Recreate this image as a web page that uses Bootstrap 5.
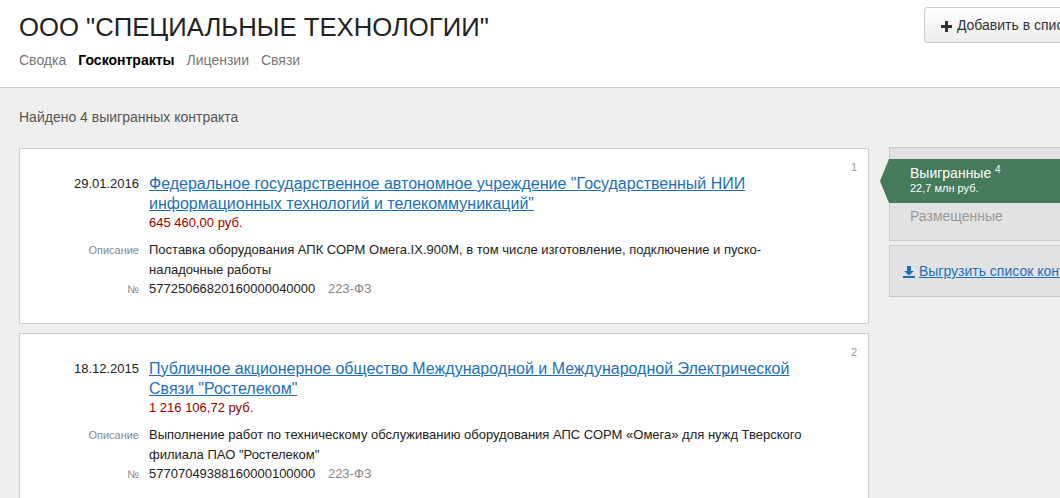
<!doctype html>
<html lang="ru"><head><meta charset="utf-8">
<link href="https://cdn.jsdelivr.net/npm/bootstrap@5.3.0/dist/css/bootstrap.min.css" rel="stylesheet">
<style>
html,body{height:498px;overflow:hidden}
body{background:#efefef;font-family:"Liberation Sans",Arial,sans-serif;color:#222;font-size:13px;width:1060px}
.topbar{height:88px;background:#fff;border-bottom:1px solid #ccc;padding:0 0 0 19px;position:relative}
.ttl{font-size:25.7px;line-height:30px;font-weight:400;margin:0;padding-top:12px;color:#222}
.tabs{margin-top:9px;gap:12px;font-size:14px;line-height:18px}
.tabs a{color:#777;text-decoration:none}
.tabs a.on{color:#000;font-weight:700}
.addbtn{position:absolute;left:924px;top:7px;width:170px;height:36px;background:linear-gradient(#fff,#ececec);border:1px solid #ccc;border-radius:3px;font-size:14px;line-height:34px;padding:0 0 0 16px;white-space:nowrap;color:#333}
.addbtn svg{margin-right:1px}
.found{padding:21px 0 0 19px;font-size:14px;line-height:16px;color:#555;height:60px}
.mainrow{padding-left:19px;gap:20px}
.leftcol{width:850px;flex:none}
.item{background:#fff;border:1px solid #ccc;height:176px;margin-bottom:9px;position:relative;padding:25px 0 0 0}
.num{position:absolute;right:11px;top:10px;font-size:11px;color:#999}
.line{display:flex}
.lab{width:119px;flex:none;text-align:right;padding-right:0}
.body-cell{width:660px;margin-left:10px}
.dt{font-size:13px;line-height:20px;color:#222}
.tt{font-size:16px;line-height:20px;color:#1d70b8;text-decoration:underline;display:block}
.price{font-size:13px;line-height:18px;color:#900;margin-bottom:8px}
.sm{font-size:11px;color:#888;line-height:20px}
.txt{font-size:13px;line-height:19.7px;color:#222}
.law{color:#888;margin-left:9px}
.side{width:200px;flex:none;margin-top:-1px}
.sidebox{background:#e2e2e2;border:1px solid #ccc;border-right:0;height:94px;position:relative}
.act{position:absolute;left:-1px;top:11px;width:200px;height:44px;background:#457b5b;color:#fff;padding:5px 0 0 21px;line-height:18px;font-size:14px}
.act:before{content:"";position:absolute;left:-9px;top:0;width:9px;height:44px;background:#457b5b;clip-path:polygon(100% 0,0 50%,100% 100%)}
.act sup{font-size:10px}
.act small{display:block;font-size:11px;line-height:13px}
.other{position:absolute;left:20px;top:59px;font-size:14px;line-height:18px;color:#999}
.dlbox{margin-top:4px;background:#e2e2e2;border:1px solid #ccc;border-right:0;height:52px;padding:15px 0 0 13px;font-size:14px;line-height:20px;white-space:nowrap;overflow:hidden}
.dlbox a{color:#1d70b8}
</style></head><body>
<div class="topbar">
<h1 class="ttl">ООО "СПЕЦИАЛЬНЫЕ ТЕХНОЛОГИИ"</h1>
<div class="d-flex tabs"><a href="#">Сводка</a><a href="#" class="on">Госконтракты</a><a href="#">Лицензии</a><a href="#">Связи</a></div>
<div class="addbtn"><svg width="11" height="11" viewBox="0 0 11 11"><path d="M4 0h3v4h4v3H7v4H4V7H0V4h4z" fill="#333"/></svg> Добавить в список</div>
</div>
<div class="found">Найдено 4 выигранных контракта</div>
<div class="d-flex mainrow">
<div class="leftcol">
<div class="item"><span class="num">1</span>
<div class="line"><div class="lab dt">29.01.2016</div><div class="body-cell"><a class="tt" href="#">Федеральное государственное автономное учреждение "Государственный НИИ информационных технологий и телекоммуникаций"</a><div class="price">645 460,00 руб.</div></div></div>
<div class="line"><div class="lab sm">Описание</div><div class="txt body-cell">Поставка оборудования АПК СОРМ Омега.IX.900М, в том числе изготовление, подключение и пуско-наладочные работы</div></div>
<div class="line"><div class="lab sm">№</div><div class="txt body-cell">57725066820160000040000 <span class="law">223-ФЗ</span></div></div>
</div>
<div class="item"><span class="num">2</span>
<div class="line"><div class="lab dt">18.12.2015</div><div class="body-cell"><a class="tt" href="#">Публичное акционерное общество Международной и Международной Электрической Связи "Ростелеком"</a><div class="price">1 216 106,72 руб.</div></div></div>
<div class="line"><div class="lab sm">Описание</div><div class="txt body-cell">Выполнение работ по техническому обслуживанию оборудования АПС СОРМ «Омега» для нужд Тверского филиала ПАО "Ростелеком"</div></div>
<div class="line"><div class="lab sm">№</div><div class="txt body-cell">57707049388160000100000 <span class="law">223-ФЗ</span></div></div>
</div>
</div>
<div class="side">
<div class="sidebox"><div class="act">Выигранные <sup>4</sup><small>22,7 млн руб.</small></div><div class="other">Размещенные</div></div>
<div class="dlbox"><svg width="12" height="12" viewBox="0 0 12 12"><path d="M4 0h4v5h3L6 9.5 1 5h3zM0 10h12v2H0z" fill="#1d70b8"/></svg> <a href="#">Выгрузить список контрактов</a></div>
</div>
</div>
<script src="https://cdn.jsdelivr.net/npm/bootstrap@5.3.0/dist/js/bootstrap.bundle.min.js"></script>
</body></html>
